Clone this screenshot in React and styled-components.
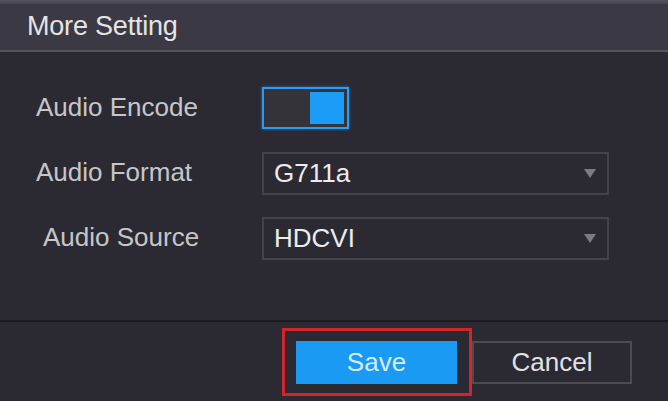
import React, { useState } from "react";
import styled, { createGlobalStyle } from "styled-components";

const Global = createGlobalStyle`
  html, body {
    margin: 0;
    padding: 0;
    background: #2b2a33;
  }
  body {
    font-family: "Liberation Sans", Arial, sans-serif;
  }
`;

const Page = styled.div`
  width: 668px;
  height: 401px;
  display: flex;
  flex-direction: column;
  background: #2b2a33;
  overflow: hidden;
`;

const TopStrip = styled.div`
  height: 4px;
  background: linear-gradient(#55545e, #46454f);
`;

const Header = styled.div`
  height: 48px;
  display: flex;
  align-items: center;
  padding-left: 27px;
  padding-bottom: 2px;
  box-sizing: border-box;
  background: #3b3a44;
  border-bottom: 2px solid #55545e;
  color: #e4e4e6;
  font-size: 27px;
  letter-spacing: -0.2px;
`;

const Body = styled.div`
  flex: 1;
  display: grid;
  grid-template-columns: 262px 347px;
  grid-auto-rows: 43px;
  row-gap: 22px;
  align-content: start;
  padding-top: 35px;
  border-bottom: 2px solid #1b1a20;
`;

const Label = styled.div`
  display: flex;
  align-items: center;
  padding-left: ${(p) => p.indent || 36}px;
  padding-bottom: 2px;
  color: #c6c6c8;
  font-size: 26px;
`;

const Toggle = styled.button`
  width: 87px;
  height: 42px;
  box-sizing: border-box;
  padding: 3px;
  display: flex;
  justify-content: ${(p) => (p.on ? "flex-end" : "flex-start")};
  background: #34333a;
  border: 2px solid #2b9cf2;
  box-shadow: 0 0 3px rgba(43, 156, 242, 0.6);
  cursor: pointer;
`;

const Knob = styled.span`
  width: 34px;
  height: 100%;
  background: #1b9cf7;
`;

const Select = styled.div`
  box-sizing: border-box;
  height: 43px;
  display: flex;
  align-items: center;
  justify-content: space-between;
  padding: 0 11px 0 10px;
  border: 2px solid #44434c;
  color: #ececee;
  font-size: 26px;
`;

const Arrow = styled.span`
  width: 0;
  height: 0;
  border-left: 6px solid transparent;
  border-right: 6px solid transparent;
  border-top: 9px solid #7c7b84;
`;

const Footer = styled.div`
  height: 79px;
  display: flex;
  justify-content: flex-end;
  align-items: flex-start;
  padding: 6px 36px 0 0;
  box-sizing: border-box;
`;

const Highlight = styled.div`
  border: 3px solid #d0262b;
  padding: 10px 12px 9px 11px;
`;

const Button = styled.button`
  width: ${(p) => (p.primary ? 161 : 160)}px;
  height: 43px;
  margin-top: ${(p) => (p.primary ? 0 : 13)}px;
  box-sizing: border-box;
  font-family: "Liberation Sans", Arial, sans-serif;
  font-size: 26px;
  color: ${(p) => (p.primary ? "#d3ecf8" : "#e2e2e4")};
  background: ${(p) => (p.primary ? "#1b9af4" : "#2b2a33")};
  border: ${(p) => (p.primary ? "none" : "2px solid #4c4b54")};
  padding: 0;
  cursor: pointer;
`;

export default function App() {
  const [encode, setEncode] = useState(true);

  return (
    <Page>
      <Global />
      <TopStrip />
      <Header>More Setting</Header>
      <Body>
        <Label>Audio Encode</Label>
        <Toggle on={encode ? 1 : 0} onClick={() => setEncode(!encode)}>
          <Knob />
        </Toggle>
        <Label>Audio Format</Label>
        <Select>
          G711a
          <Arrow />
        </Select>
        <Label indent={43}>Audio Source</Label>
        <Select>
          HDCVI
          <Arrow />
        </Select>
      </Body>
      <Footer>
        <Highlight>
          <Button primary>Save</Button>
        </Highlight>
        <Button>Cancel</Button>
      </Footer>
    </Page>
  );
}
